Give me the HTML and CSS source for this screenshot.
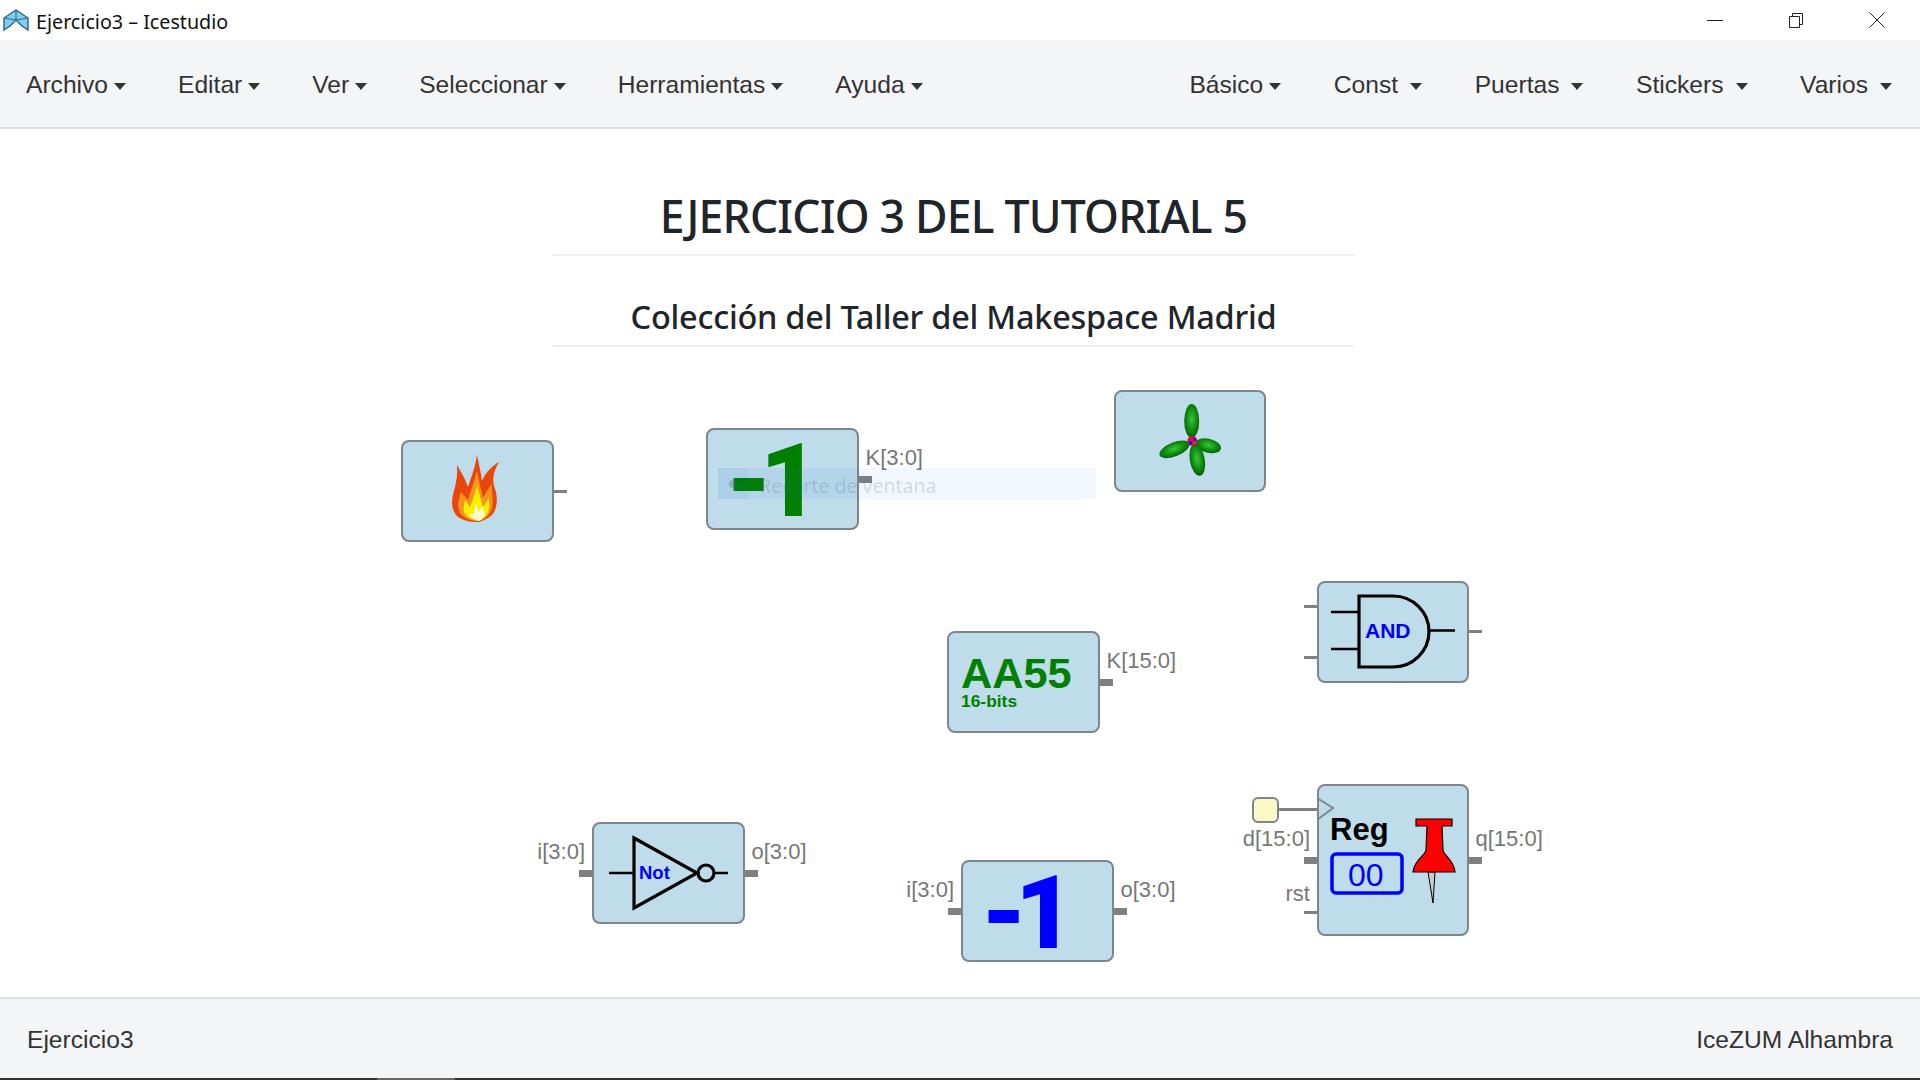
FILE: index.html

```html
<!DOCTYPE html>
<html lang="es">
<head>
  <meta charset="UTF-8">
  <title>Ejercicio3 – Icestudio</title>
  <link rel="stylesheet" href="styles.css">
</head>
<body>

  <div class="titlebar">
    <svg class="app-icon" viewBox="0 0 26 22" width="26" height="22">
      <path d="M13 1 L25 9 V21 L19 17 L13 11 L7 17 L1 21 V9 Z" fill="#7fd0f0" stroke="#2c5f86" stroke-width="1.4"/>
      <path d="M1 9 L13 11 L25 9 M13 1 V11" fill="none" stroke="#2c5f86" stroke-width="1"/>
    </svg>
    <span class="window-title">Ejercicio3 – Icestudio</span>
    <div class="window-buttons">
      <svg width="16" height="16" viewBox="0 0 16 16"><path d="M0 8.5 H16" stroke="#222" fill="none"/></svg>
      <svg width="16" height="16" viewBox="0 0 16 16"><path d="M1.5 4.5 H11.5 V15.5 H1.5 Z M4.5 4.5 V1.5 H14.5 V12.5 H11.5" stroke="#222" fill="none"/></svg>
      <svg width="16" height="16" viewBox="0 0 16 16"><path d="M0.5 0.5 L15.5 15.5 M15.5 0.5 L0.5 15.5" stroke="#222" fill="none"/></svg>
    </div>
  </div>

  <nav class="menubar">
    <ul class="menu">
      <li class="caret">Archivo</li>
      <li class="caret">Editar</li>
      <li class="caret">Ver</li>
      <li class="caret">Seleccionar</li>
      <li class="caret">Herramientas</li>
      <li class="caret">Ayuda</li>
    </ul>
    <ul class="menu menu-right">
      <li class="caret">Básico</li>
      <li class="caret wide">Const</li>
      <li class="caret wide">Puertas</li>
      <li class="caret wide">Stickers</li>
      <li class="caret wide">Varios</li>
    </ul>
  </nav>

  <main class="content">
    <div class="titles">
      <h1>EJERCICIO 3 DEL TUTORIAL 5</h1>
      <h2>Colección del Taller del Makespace Madrid</h2>
    </div>

    <div class="canvas">

      <div class="block wide-block node-fire">
        <svg class="art" viewBox="0 0 152 101">
          <path d="M77 82 C66 82 60 80 55 76 C50 71 49 62 51 55 C53 47 56 38 55 25 C59 32 63 38 66 47 C69 38 73 28 75 15 C77 25 79 33 80 41 C84 32 90 26 97 22 C92 30 90 38 92 46 C95 53 96 62 93 70 C90 77 85 79 77 82Z" fill="#e8460a"/>
          <path d="M77 81 C68 81 62 78 58 73 C55 67 56 60 59 52 L66 60 C69 50 72 42 75 31 C77 41 79 50 81 58 C84 52 87 47 90 44 C89 52 92 60 90 68 C88 75 84 78 77 81Z" fill="#f7931e"/>
          <path d="M77 81 C70 80 65 77 62 72 C61 68 62 64 63 60 L68 67 C71 60 73 53 75 45 C77 53 79 60 81 67 C83 64 85 61 87 58 C87 64 88 68 86 72 C84 77 81 79 77 81Z" fill="#f5f000"/>
          <path d="M77 81 C72 80 68 77 67 73 L71 75 L74 64 L77 72 L80 66 L83 74 C81 78 80 79 77 81Z" fill="#fffbd0"/>
        </svg>
        <span class="port thin port-right fire-out"></span>
      </div>

      <div class="block wide-block node-const4">
        <svg class="art" viewBox="0 0 152 101"><text class="big-number green" x="19 53" y="88">-1</text></svg>
        <span class="port port-right port-mid"></span>
        <span class="label label-right label-mid">K[3:0]</span>
      </div>

      <div class="block node-flower">
        <svg class="art" viewBox="0 0 152 101">
          <defs>
            <radialGradient id="petal" cx="50%" cy="45%" r="55%">
              <stop offset="0" stop-color="#3fc43f"/>
              <stop offset="0.6" stop-color="#0d8f0d"/>
              <stop offset="1" stop-color="#045f04"/>
            </radialGradient>
          </defs>
          <ellipse cx="77.7" cy="31" rx="7.5" ry="17" fill="url(#petal)"/>
          <ellipse cx="60.5" cy="59.3" rx="16" ry="7" fill="url(#petal)" transform="rotate(-22 60.5 59.3)"/>
          <ellipse cx="94.3" cy="55.7" rx="13" ry="7" fill="url(#petal)" transform="rotate(14 94.3 55.7)"/>
          <ellipse cx="83.3" cy="70" rx="7.5" ry="16" fill="url(#petal)" transform="rotate(-10 83.3 70)"/>
          <circle cx="78.3" cy="51" r="5" fill="#d0104a"/>
          <circle cx="76.5" cy="53" r="1.7" fill="#1010e0"/>
          <circle cx="80.5" cy="49.5" r="1.5" fill="#1010e0"/>
          <circle cx="80.5" cy="53" r="1.2" fill="#ff3030"/>
        </svg>
      </div>

      <div class="block wide-block node-const16">
        <svg class="art" viewBox="0 0 152 101">
          <text class="aa-value green" x="13" y="57">AA55</text>
          <text class="aa-bits green" x="13" y="76">16-bits</text>
        </svg>
        <span class="port port-right port-mid"></span>
        <span class="label label-right label-mid">K[15:0]</span>
      </div>

      <div class="block node-and">
        <svg class="art" viewBox="0 0 152 101">
          <path class="gate" d="M42 15 H76 A36 35.5 0 0 1 76 86 H42 Z"/>
          <path class="gate-wire" d="M14 31 H42 M14 68 H42 M112 49.5 H138"/>
          <text class="gate-name" x="48" y="57" font-size="21">AND</text>
        </svg>
        <span class="port thin port-left and-in1"></span>
        <span class="port thin port-left and-in2"></span>
        <span class="port thin port-right port-mid-thin"></span>
      </div>

      <div class="block wide-block node-not">
        <svg class="art" viewBox="0 0 152 101">
          <path class="gate" d="M41 15 L104 50 L41 85 Z"/>
          <circle class="gate" cx="113" cy="50" r="8"/>
          <path class="gate-wire" d="M16 50 H41 M121 50 H135"/>
          <text class="gate-name" x="46" y="56" font-size="18.5">Not</text>
        </svg>
        <span class="port port-left port-mid"></span>
        <span class="port port-right port-mid"></span>
        <span class="label label-left label-mid">i[3:0]</span>
        <span class="label label-right label-mid">o[3:0]</span>
      </div>

      <div class="block wide-block node-dec">
        <svg class="art" viewBox="0 0 152 101"><text class="big-number blue" x="19 53" y="88">-1</text></svg>
        <span class="port port-left port-mid"></span>
        <span class="port port-right port-mid"></span>
        <span class="label label-left label-mid">i[3:0]</span>
        <span class="label label-right label-mid">o[3:0]</span>
      </div>

      <div class="block node-reg">
        <svg class="art" viewBox="0 0 152 151">
          <path class="clock" d="M0 14 L16 24 L0 36"/>
          <text class="reg-name" x="13" y="56">Reg</text>
          <rect class="reg-box" x="15" y="70" width="70" height="39" rx="4"/>
          <text class="reg-value" x="31" y="102">00</text>
          <path d="M111 88 L118 88 L116 119 Z" fill="#ccc" stroke="#000" stroke-width="1"/>
          <path d="M99 35 H135 V42 H125 L126 66 C127 72 137 76 138 88 H96 C97 76 108 72 109 66 L110 42 H99 Z" fill="#f00" stroke="#000" stroke-width="1.2"/>
        </svg>
        <span class="port port-left reg-port"></span>
        <span class="port port-right reg-port"></span>
        <span class="port thin port-left reg-rst"></span>
        <span class="label label-left reg-label">d[15:0]</span>
        <span class="label label-right reg-label">q[15:0]</span>
        <span class="label label-left rst-label">rst</span>
      </div>

      <div class="clock-input"></div>

      <div class="snip-hint">
        <span class="snip-icon"><i></i></span>
        <span class="snip-text">Recorte de ventana</span>
      </div>
    </div>
  </main>

  <footer class="statusbar">
    <span>Ejercicio3</span>
    <span>IceZUM Alhambra</span>
  </footer>
  <div class="taskbar"><span class="taskbar-tab"></span></div>

</body>
</html>
```

FILE: styles.css

```css
* {
  box-sizing: border-box;
}
html, body {
  height: 100%;
}
body {
  margin: 0;
  display: flex;
  flex-direction: column;
  overflow: hidden;
  background: #fff;
  font-family: "Liberation Sans", Arial, sans-serif;
  color: #333;
}

/* window title */
.titlebar {
  height: 40px;
  flex: none;
  display: flex;
  align-items: center;
  padding-left: 3px;
  background: #fff;
}
.app-icon {
  flex: none;
}
.window-title {
  margin-left: 7px;
  padding-top: 2px;
  font-family: "Noto Sans", sans-serif;
  font-size: 19.7px;
  color: #111;
}
.window-buttons {
  margin-left: auto;
  margin-right: 35px;
  display: flex;
  gap: 65px;
}

/* menus */
.menubar {
  height: 89px;
  flex: none;
  display: flex;
  justify-content: space-between;
  align-items: center;
  padding: 2px 28px 0 26px;
  background: #f4f5f7;
  border-bottom: 2px solid #dcdde0;
}
.menu {
  display: flex;
  gap: 52px;
  margin: 0;
  padding: 0;
  list-style: none;
  font-size: 24.6px;
}
.menu-right {
  gap: 52.6px;
}
.caret::after {
  content: "";
  display: inline-block;
  margin-left: 6px;
  vertical-align: 3px;
  border-top: 7px solid #333;
  border-left: 6px solid transparent;
  border-right: 6px solid transparent;
}
.caret.wide::after {
  margin-left: 12px;
}

/* page */
.content {
  flex: 1;
  display: flex;
  flex-direction: column;
}
.titles {
  width: 801px;
  margin-left: 553px;
  color: #212529;
  font-family: "Noto Sans", sans-serif;
  text-align: center;
}
h1, h2 {
  margin: 0;
  font-weight: 500;
  border-bottom: 2px solid #eee;
}
h1 {
  padding-top: 57px;
  padding-bottom: 8px;
  font-size: 44.5px;
  letter-spacing: -0.8px;
  line-height: 60px;
}
h2 {
  padding-top: 41px;
  padding-bottom: 8px;
  font-size: 32.5px;
  letter-spacing: -0.25px;
  line-height: 40px;
}

/* diagram */
.canvas {
  flex: 1;
  position: relative;
}
.block {
  position: absolute;
  width: 152px;
  height: 102px;
  background: #bfdcea;
  border: 2px solid #7c868c;
  border-radius: 8px;
}
.art {
  position: absolute;
  left: -2px;
  top: -2px;
  width: 152px;
  height: 101px;
  overflow: visible;
}
.wide-block {
  width: 153px;
}
.wide-block .art {
  left: -1px;
}
.node-fire { left: 401px; top: 93px; }
.node-const4 { left: 706px; top: 81px; }
.node-flower { left: 1114px; top: 43px; }
.node-const16 { left: 947px; top: 284px; }
.node-and { left: 1317px; top: 234px; }
.node-not { left: 592px; top: 475px; }
.node-not .art { left: -1px; top: -1px; }
.node-dec { left: 961px; top: 513px; }
.node-reg { left: 1317px; top: 437px; height: 152px; }
.node-reg .art { height: 151px; }

.port {
  position: absolute;
  width: 13px;
  height: 7px;
  background: #808080;
}
.port.thin {
  height: 3px;
}
.port-left { right: calc(100% + 2px); }
.port-right { left: calc(100% + 2px); }
.port-mid { top: 46px; }
.port-mid-thin { top: 47px; }
.fire-out { top: 48px; }
.and-in1 { top: 22px; }
.and-in2 { top: 73px; }
.reg-port { top: 71px; }
.reg-rst { top: 125px; }

.label {
  position: absolute;
  font-size: 22px;
  line-height: 24px;
  color: #777;
  white-space: nowrap;
}
.label-left { right: calc(100% + 9px); }
.label-right { left: calc(100% + 8.5px); }
.label-mid { top: 16px; }
.reg-label { top: 41px; }
.rst-label { top: 96px; }

/* Roboto because its 1 has no foot, like the original */
.big-number {
  font-family: Roboto, sans-serif;
  font-size: 102.5px;
  font-weight: 900;
}
.green { fill: #008000; }
.blue { fill: #0000ff; }
.aa-value {
  font-size: 43.3px;
  font-weight: bold;
}
.aa-bits {
  font-size: 17.4px;
  font-weight: bold;
}
.gate {
  fill: none;
  stroke: #000;
  stroke-width: 3.2px;
}
.gate-wire {
  fill: none;
  stroke: #000;
  stroke-width: 2.4px;
}
.gate-name {
  font-weight: bold;
  fill: #0000ff;
}
.clock {
  fill: none;
  stroke: #7c868c;
  stroke-width: 2px;
}
.reg-name {
  font-size: 31px;
  font-weight: bold;
  fill: #000;
}
.reg-box {
  fill: none;
  stroke: #0000ff;
  stroke-width: 3.5px;
}
.reg-value {
  font-size: 32px;
  fill: #0000ff;
}
.clock-input {
  position: absolute;
  left: 1252px;
  top: 450px;
  width: 27px;
  height: 26px;
  background: #fbf8c8;
  border: 2px solid #7c868c;
  border-radius: 6px;
}
.clock-input::after {
  content: "";
  position: absolute;
  left: 25px;
  top: 9px;
  width: 38px;
  height: 3px;
  background: #808080;
}

/* faded snipping tool toast over the diagram */
.snip-hint {
  position: absolute;
  left: 718px;
  top: 121px;
  width: 378px;
  height: 31px;
  display: flex;
  align-items: center;
  background: rgba(0, 110, 220, 0.055);
}
.snip-icon {
  width: 30px;
  height: 100%;
  display: flex;
  align-items: center;
  justify-content: center;
  background: rgba(0, 110, 220, 0.05);
}
.snip-icon i {
  width: 8px;
  height: 8px;
  border-radius: 50%;
  background: rgba(90, 90, 90, 0.3);
}
.snip-text {
  margin-left: 11px;
  padding-top: 3px;
  font-family: "Noto Sans", sans-serif;
  font-size: 19.5px;
  color: rgba(80, 90, 100, 0.2);
}

/* bottom */
.statusbar {
  height: 81px;
  flex: none;
  display: flex;
  justify-content: space-between;
  align-items: center;
  padding: 2px 27px 0;
  background: #f4f5f7;
  border-top: 2px solid #dcdde0;
  font-size: 24.6px;
}
.taskbar {
  height: 2px;
  flex: none;
  background: #333;
}
.taskbar-tab {
  display: block;
  width: 78px;
  height: 2px;
  margin-left: 377px;
  background: #666;
}
```
